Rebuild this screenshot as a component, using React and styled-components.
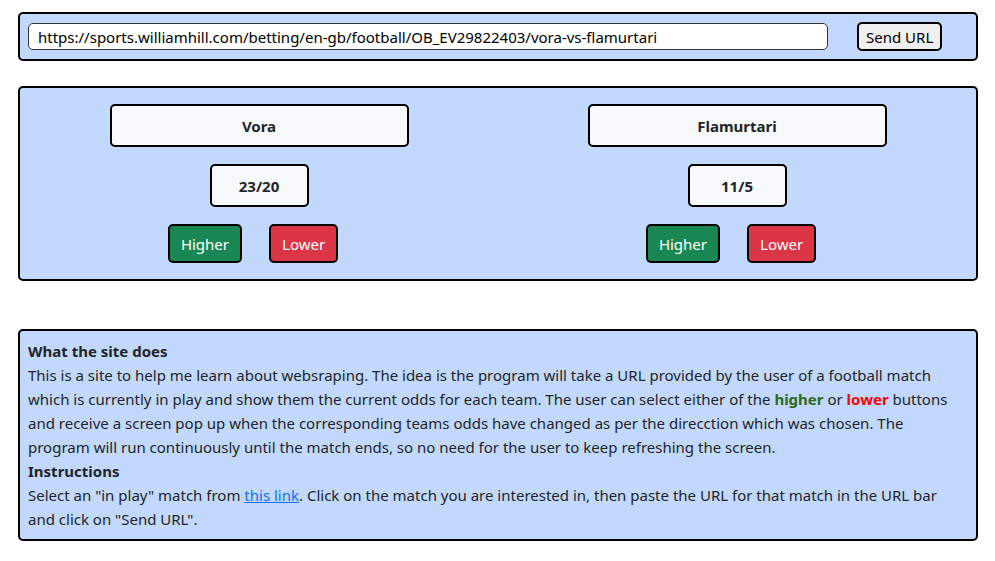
import React from "react";
import styled, { createGlobalStyle } from "styled-components";

const Global = createGlobalStyle`
  html, body { margin: 0; padding: 0; background: #fff; }
  body {
    font-family: "Noto Sans", "Open Sans", sans-serif;
    font-size: 15px;
    line-height: 24px;
    color: #212529;
  }
  * { box-sizing: border-box; }
`;

const Page = styled.div`
  padding: 12px 17px 0 18px;
  display: flex;
  flex-direction: column;
`;

const Panel = styled.div`
  background: #c2d9fd;
  border: 2px solid #000;
  border-radius: 5px;
  margin-bottom: ${(p) => p.$mb || 0}px;
`;

const UrlBar = styled(Panel)`
  display: flex;
  align-items: center;
  gap: 29px;
  padding: 8px;
  height: 49px;
`;

const UrlInput = styled.input`
  width: 800px;
  height: 27px;
  border: 1px solid #333;
  border-radius: 5px;
  background: #fff;
  padding: 0 9px;
  font-family: inherit;
  font-size: 15px;
  color: #000;
  outline: none;
`;

const SendButton = styled.button`
  height: 29px;
  padding: 0 7px;
  background: #efefef;
  border: 2px solid #000;
  border-radius: 5px;
  font-family: inherit;
  font-size: 15px;
  color: #000;
  cursor: pointer;
`;

const Match = styled(Panel)`
  display: grid;
  grid-template-columns: 1fr 1fr;
  padding: 16px 0 16px;
`;

const Team = styled.div`
  display: flex;
  flex-direction: column;
  align-items: center;
`;

const InfoBox = styled.div`
  width: ${(p) => p.$w}px;
  height: 43px;
  display: flex;
  align-items: center;
  justify-content: center;
  background: #f8f9fa;
  border: 2px solid #000;
  border-radius: 5px;
  font-weight: 700;
  font-size: 15px;
  margin-bottom: 17px;
`;

const Buttons = styled.div`
  display: flex;
  gap: 27px;
  padding-right: 12px;
`;

const VoteButton = styled.button`
  height: 39px;
  padding: 0 11px;
  border: 2px solid #000;
  border-radius: 5px;
  background: ${(p) => (p.$kind === "up" ? "#198754" : "#dc3545")};
  color: #fff;
  font-family: inherit;
  font-size: 15px;
  cursor: pointer;
`;

const About = styled(Panel)`
  margin-top: 48px;
  padding: 8px 12px 8px 8px;
`;

const Heading = styled.div`
  font-weight: 700;
`;

const Para = styled.div``;

const Hl = styled.b`
  color: ${(p) => p.$c};
`;

const Link = styled.a`
  color: #0d6efd;
  text-decoration: underline;
`;

function TeamColumn({ name, odds }) {
  return (
    <Team>
      <InfoBox $w={299}>{name}</InfoBox>
      <InfoBox $w={99}>{odds}</InfoBox>
      <Buttons>
        <VoteButton $kind="up">Higher</VoteButton>
        <VoteButton $kind="down">Lower</VoteButton>
      </Buttons>
    </Team>
  );
}

export default function App() {
  return (
    <>
      <Global />
      <Page>
        <UrlBar $mb={25}>
          <UrlInput
            defaultValue="https://sports.williamhill.com/betting/en-gb/football/OB_EV29822403/vora-vs-flamurtari"
          />
          <SendButton>Send URL</SendButton>
        </UrlBar>
        <Match>
          <TeamColumn name="Vora" odds="23/20" />
          <TeamColumn name="Flamurtari" odds="11/5" />
        </Match>
        <About>
          <Heading>What the site does</Heading>
          <Para>
            This is a site to help me learn about websraping. The idea is the program will take a URL
            provided by the user of a football match which is currently in play and show them the
            current odds for each team. The user can select either of the{" "}
            <Hl $c="#2d6a1a">higher</Hl> or <Hl $c="#ff0000">lower</Hl> buttons and receive a screen
            pop up when the corresponding teams odds have changed as per the direcction which was
            chosen. The program will run continuously until the match ends, so no need for the user
            to keep refreshing the screen.
          </Para>
          <Heading>Instructions</Heading>
          <Para>
            Select an "in play" match from <Link href="#">this link</Link>. Click on the match you
            are interested in, then paste the URL for that match in the URL bar and click on "Send
            URL".
          </Para>
        </About>
      </Page>
    </>
  );
}
